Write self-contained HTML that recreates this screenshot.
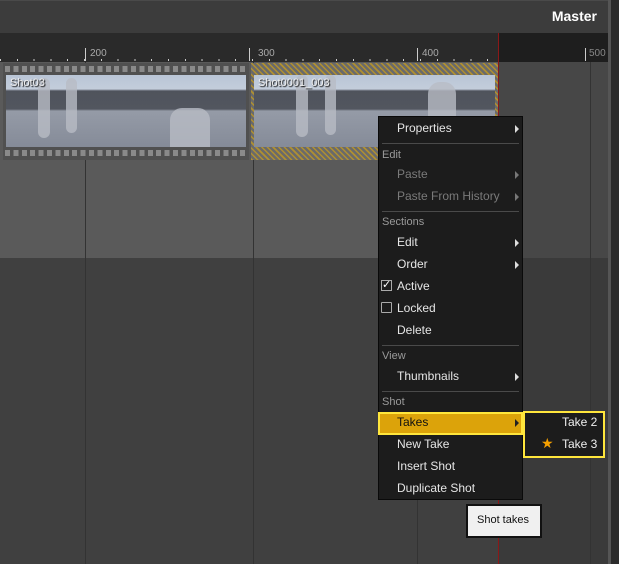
<!DOCTYPE html>
<html><head><meta charset="utf-8"><style>
*{margin:0;padding:0;box-sizing:border-box}
body{width:619px;height:564px;overflow:hidden;background:#404040;font-family:"Liberation Sans",sans-serif;position:relative}
.a{position:absolute}
.menu{left:378px;top:116px;width:145px;height:384px;background:#1c1c1c;border:1px solid #0a0a0a}
.it{position:absolute;left:18px;font-size:12px;color:#e6e6e6}
.hd{position:absolute;left:3px;font-size:11px;color:#9a9a9a}
.dis{color:#7a7a7a}
.sep{position:absolute;left:3px;width:137px;height:1px;background:#4a4a4a}
.arr{position:absolute;left:136px;width:0;height:0;border-top:4px solid transparent;border-bottom:4px solid transparent;border-left:4px solid #ddd}
.img{position:absolute;top:75px;height:72px;background:linear-gradient(#b9c5d6 0,#c3cddb 14px,#4f535c 16px,#52565f 34px,#959ba7 36px,#858b98 72px)}
.fig{position:absolute;background:#b8bcc4;border-radius:6px;opacity:.8}
.lbl{position:absolute;font-size:11px;color:#eee;text-shadow:1px 1px 1px #000}
</style></head><body>
<div class="a" style="left:0;top:0;width:619px;height:33px;background:#3c3c3c;border-top:1px solid #4a4a4a"></div>
<div class="a" style="right:22px;top:8px;font-size:14px;font-weight:bold;color:#fff">Master</div>
<div class="a" style="left:0;top:33px;width:498px;height:29px;background:#2a2a2a"></div>
<div class="a" style="left:498px;top:33px;width:110px;height:29px;background:#1e1e1e"></div>
<div class="a" style="left:0;top:62px;width:498px;height:196px;background:#5a5a5a"></div>
<div class="a" style="left:498px;top:62px;width:110px;height:196px;background:#474747"></div>
<div class="a" style="left:498px;top:258px;width:110px;height:306px;background:#3a3a3a"></div>
<div class="a" style="left:608px;top:0;width:3px;height:564px;background:#555"></div>
<div class="a" style="left:611px;top:0;width:8px;height:564px;background:#2b2b2b"></div>
<div class="a" style="left:85px;top:62px;width:1px;height:502px;background:#333"></div>
<div class="a" style="left:253px;top:62px;width:1px;height:502px;background:#333"></div>
<div class="a" style="left:417px;top:258px;width:1px;height:306px;background:#333"></div>
<div class="a" style="left:590px;top:62px;width:1px;height:502px;background:#333"></div>
<div class="a" style="left:498px;top:33px;width:1px;height:531px;background:#8a1818"></div>
<div class="a" style="left:0;top:59px;width:498px;height:2px;background:repeating-linear-gradient(90deg,#ccc 0,#ccc 1px,transparent 1px,transparent 16.8px)"></div>
<div class="a" style="left:85px;top:48px;width:1px;height:13px;background:#ccc"></div>
<div class="a" style="left:249px;top:48px;width:1px;height:13px;background:#ccc"></div>
<div class="a" style="left:417px;top:48px;width:1px;height:13px;background:#ccc"></div>
<div class="a" style="left:585px;top:48px;width:1px;height:13px;background:#ccc"></div>
<div class="a" style="left:90px;top:48px;font-size:10px;color:#aaa">200</div>
<div class="a" style="left:258px;top:48px;font-size:10px;color:#aaa">300</div>
<div class="a" style="left:422px;top:48px;font-size:10px;color:#aaa">400</div>
<div class="a" style="left:589px;top:48px;font-size:10px;color:#888">500</div>
<div class="a" style="left:3px;top:63px;width:246px;height:97px;background:#505050"></div>
<div class="a" style="left:5px;top:66px;width:242px;height:6px;background:repeating-linear-gradient(90deg,#8a8a8a 0,#8a8a8a 5px,transparent 5px,transparent 8.4px)"></div>
<div class="a" style="left:5px;top:150px;width:242px;height:6px;background:repeating-linear-gradient(90deg,#8a8a8a 0,#8a8a8a 5px,transparent 5px,transparent 8.4px)"></div>
<div class="img" style="left:6px;width:124px"></div>
<div class="img" style="left:130px;width:116px"></div>
<div class="fig" style="left:38px;top:78px;width:12px;height:60px"></div>
<div class="fig" style="left:66px;top:78px;width:11px;height:55px"></div>
<div class="fig" style="left:170px;top:108px;width:40px;height:39px;border-radius:12px 12px 0 0"></div>
<div class="lbl" style="left:10px;top:77px">Shot03</div>
<div class="a" style="left:251px;top:63px;width:247px;height:97px;background:repeating-linear-gradient(45deg,#b09030 0,#b09030 1.5px,#6a6a6a 1.5px,#6a6a6a 4px)"></div>
<div class="img" style="left:254px;width:124px"></div>
<div class="img" style="left:378px;width:117px"></div>
<div class="fig" style="left:296px;top:75px;width:12px;height:62px"></div>
<div class="fig" style="left:325px;top:75px;width:11px;height:60px"></div>
<div class="fig" style="left:428px;top:82px;width:28px;height:40px;border-radius:12px 12px 4px 4px"></div>
<div class="lbl" style="left:258px;top:77px">Shot0001_003</div>
<div class="a menu">
<div class="it" style="top:4px">Properties</div><div class="arr" style="top:8px"></div>
<div class="sep" style="top:26px"></div>
<div class="hd" style="top:32px">Edit</div>
<div class="it dis" style="top:50px">Paste</div><div class="arr" style="top:54px;border-left-color:#777"></div>
<div class="it dis" style="top:72px">Paste From History</div><div class="arr" style="top:76px;border-left-color:#777"></div>
<div class="sep" style="top:94px"></div>
<div class="hd" style="top:99px">Sections</div>
<div class="it" style="top:118px">Edit</div><div class="arr" style="top:122px"></div>
<div class="it" style="top:140px">Order</div><div class="arr" style="top:144px"></div>
<div class="a" style="left:2px;top:163px;width:11px;height:11px;border:1px solid #aaa;color:#fff;font-size:11px;line-height:9px;text-align:center">✓</div>
<div class="it" style="top:162px">Active</div>
<div class="a" style="left:2px;top:185px;width:11px;height:11px;border:1px solid #aaa;border-radius:1px"></div>
<div class="it" style="top:184px">Locked</div>
<div class="it" style="top:206px">Delete</div>
<div class="sep" style="top:228px"></div>
<div class="hd" style="top:233px">View</div>
<div class="it" style="top:252px">Thumbnails</div><div class="arr" style="top:256px"></div>
<div class="sep" style="top:274px"></div>
<div class="hd" style="top:279px">Shot</div>
<div class="a" style="left:-1px;top:295px;width:145px;height:23px;background:#dca30a;border:2px solid #ffe63c"></div>
<div class="it" style="top:298px;color:#111">Takes</div><div class="arr" style="top:302px;border-left-color:#222"></div>
<div class="it" style="top:320px">New Take</div>
<div class="it" style="top:342px">Insert Shot</div>
<div class="it" style="top:364px">Duplicate Shot</div>
</div>
<div class="a" style="left:523px;top:411px;width:82px;height:47px;background:#1c1c1c;border:2px solid #ffe63c"></div>
<div class="a" style="left:562px;top:415px;font-size:12px;color:#eee">Take 2</div>
<div class="a" style="left:541px;top:435px;font-size:14px;color:#f5a000">★</div>
<div class="a" style="left:562px;top:437px;font-size:12px;color:#eee">Take 3</div>
<div class="a" style="left:466px;top:504px;width:76px;height:34px;background:#f0f0f0;border:2px solid #111"></div>
<div class="a" style="left:477px;top:514px;font-size:11px;color:#111">Shot takes</div>
</body></html>
